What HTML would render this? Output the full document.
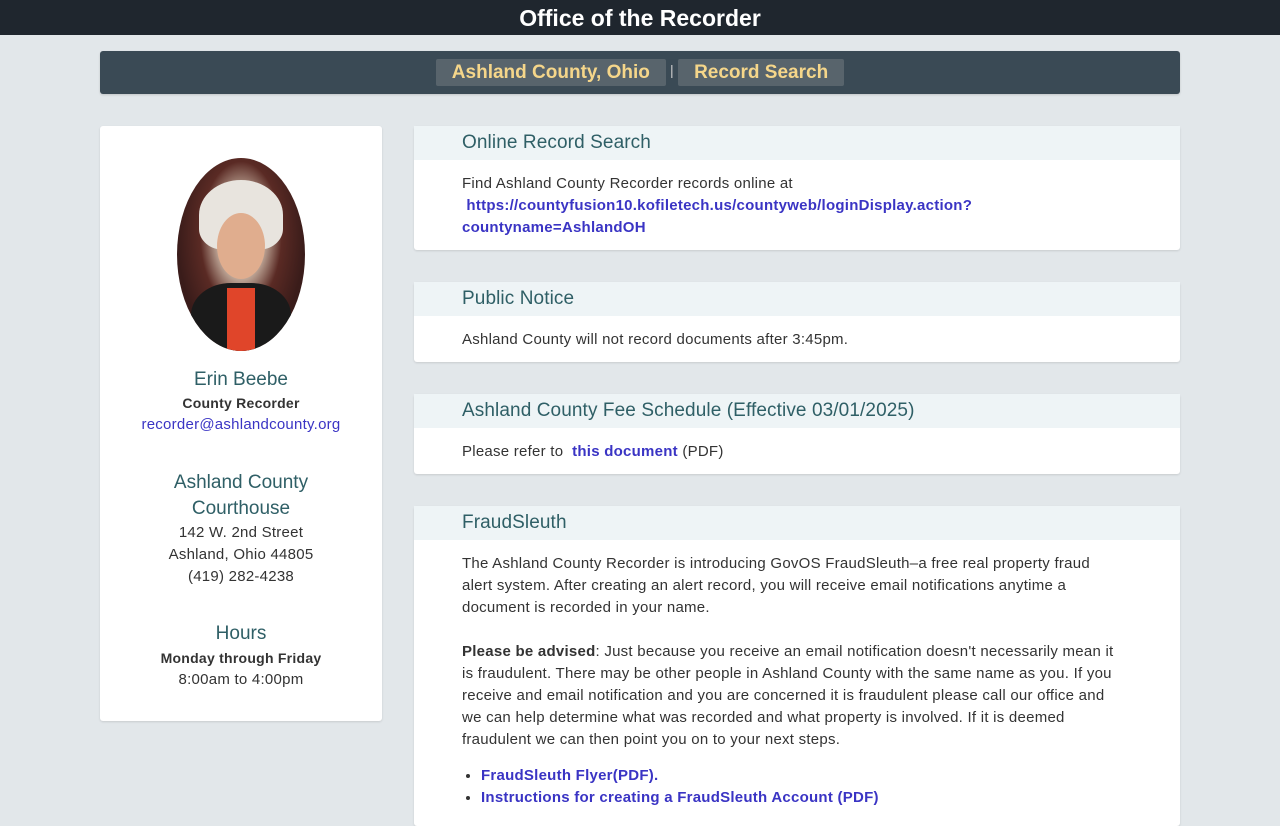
<!DOCTYPE html>
<html><head><meta charset="utf-8"><style>
*{box-sizing:border-box;margin:0;padding:0}
body{width:1280px;height:800px;overflow:hidden;background:#e2e7ea;font-family:"Liberation Sans",sans-serif;color:#333;font-size:15px;line-height:22px;letter-spacing:0.25px}
.top{height:35px;background:#1f262e;color:#fff;text-align:center;font-size:23px;font-weight:bold;line-height:36px;letter-spacing:0}
.nav{position:absolute;left:100px;top:51px;width:1080px;height:43px;background:#3a4a55;border-radius:3px;text-align:center;padding-top:8px;color:#ccc;font-size:14px;box-shadow:0 1px 2px rgba(0,0,0,.15)}
.nav span.b{display:inline-block;background:#58646c;color:#f5d68a;font-size:19px;font-weight:bold;height:27px;line-height:27px;padding:0 16px;border-radius:2px;vertical-align:top;letter-spacing:0}
.side{position:absolute;left:100px;top:126px;width:282px;height:595px;background:#fff;border-radius:3px;box-shadow:0 1px 2px rgba(0,0,0,.12);text-align:center}
.oval{position:absolute;left:77px;top:32px;width:128px;height:193px;border-radius:50%;background:radial-gradient(ellipse at 50% 40%,#e8e0d8 0,#d9c8b6 22%,#5a2a24 45%,#3a1c1a 70%);overflow:hidden}
.oval .body{position:absolute;left:14px;top:125px;width:100px;height:80px;background:#1a1a1a;border-radius:40% 40% 0 0}
.oval .shirt{position:absolute;left:50px;top:130px;width:28px;height:70px;background:#e0452a}
.oval .hair{position:absolute;left:22px;top:22px;width:84px;height:70px;border-radius:50% 50% 30% 30%;background:#e8e4de}
.oval .face2{position:absolute;left:40px;top:55px;width:48px;height:66px;border-radius:50%;background:#e0ad8e}
.h{color:#2f5f66;font-size:19px;letter-spacing:0}
.card{position:absolute;left:414px;width:766px;background:#fff;border-radius:3px;box-shadow:0 1px 2px rgba(0,0,0,.12)}
.card .hd{background:#eef4f6;height:34px;line-height:34px;padding-left:48px;color:#2f5f66;font-size:19px;letter-spacing:0.1px}
.card .bd{padding:13px 56px 12px 48px}
a{color:#3a34c4;font-weight:bold;text-decoration:none}
ul{margin:14px 0 0 19px}
</style></head><body>
<div class="top">Office of the Recorder</div>
<div class="nav"><span class="b">Ashland County, Ohio</span> | <span class="b">Record Search</span></div>
<div class="side">
<div class="oval"><div class="body"></div><div class="shirt"></div><div class="hair"></div><div class="face2"></div></div>
<div style="position:absolute;top:241px;width:100%">
<div class="h" style="line-height:24px;margin-top:1px">Erin Beebe</div>
<div style="font-weight:bold;font-size:14px">County Recorder</div>
<div><a href="#" style="font-weight:normal">recorder@ashlandcounty.org</a></div>
<div class="h" style="margin-top:34px;line-height:26px">Ashland County<br>Courthouse</div>
<div>142 W. 2nd Street<br>Ashland, Ohio 44805<br>(419) 282-4238</div>
<div class="h" style="margin-top:33px;line-height:26px">Hours</div>
<div style="font-weight:bold;font-size:14px">Monday through Friday</div>
<div>8:00am to 4:00pm</div>
</div></div>
<div class="card" style="top:126px;height:124px"><div class="hd">Online Record Search</div><div class="bd">Find Ashland County Recorder records online at<br><a href="#">&nbsp;https://countyfusion10.kofiletech.us/countyweb/loginDisplay.action?<br>countyname=AshlandOH</a></div></div>
<div class="card" style="top:282px;height:80px"><div class="hd">Public Notice</div><div class="bd">Ashland County will not record documents after 3:45pm.</div></div>
<div class="card" style="top:394px;height:80px"><div class="hd">Ashland County Fee Schedule (Effective 03/01/2025)</div><div class="bd">Please refer to &nbsp;<a href="#">this document</a> (PDF)</div></div>
<div class="card" style="top:506px;height:320px"><div class="hd">FraudSleuth</div><div class="bd">The Ashland County Recorder is introducing GovOS FraudSleuth–a free real property fraud alert system. After creating an alert record, you will receive email notifications anytime a document is recorded in your name.<br><br><b>Please be advised</b>: Just because you receive an email notification doesn't necessarily mean it is fraudulent. There may be other people in Ashland County with the same name as you. If you receive and email notification and you are concerned it is fraudulent please call our office and we can help determine what was recorded and what property is involved. If it is deemed fraudulent we can then point you on to your next steps.
<ul><li><a href="#">FraudSleuth Flyer(PDF).</a></li><li><a href="#">Instructions for creating a FraudSleuth Account (PDF)</a></li></ul></div></div>
</body></html>
